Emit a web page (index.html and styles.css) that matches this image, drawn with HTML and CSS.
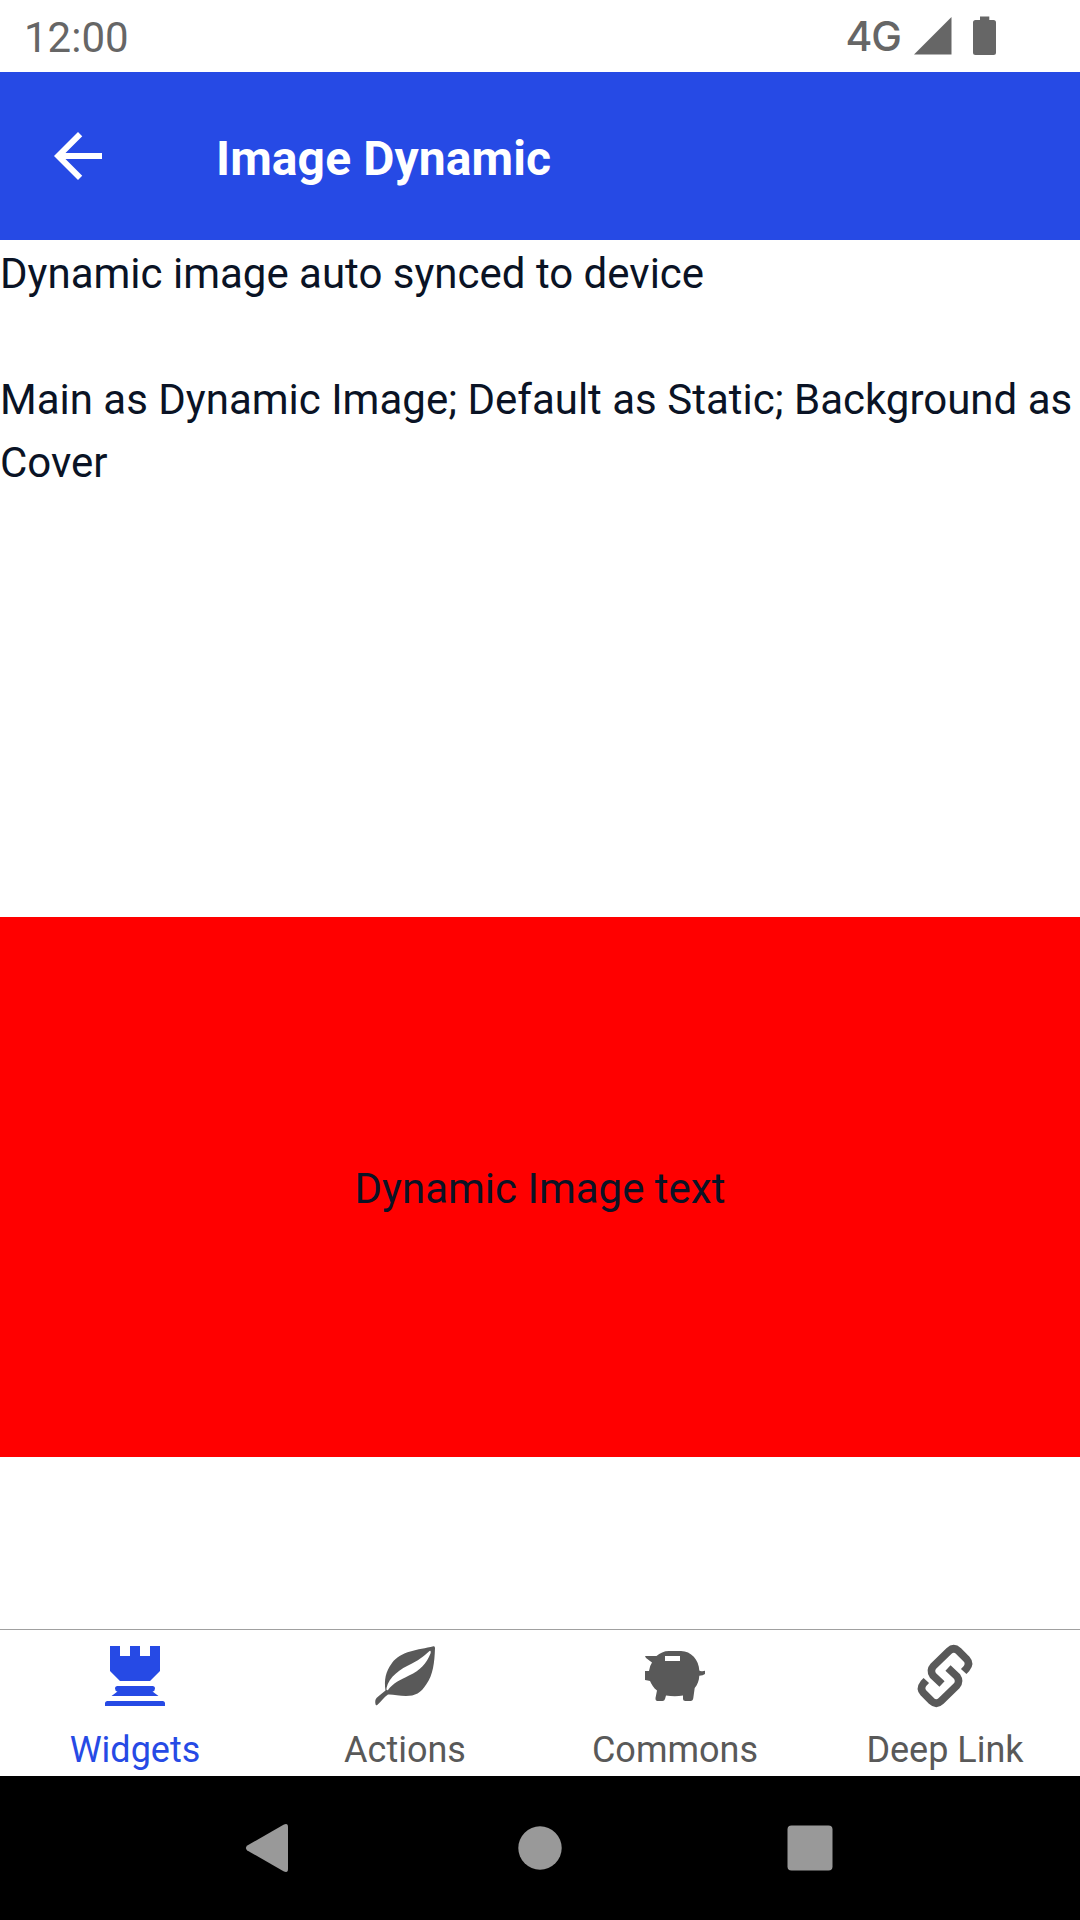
FILE: index.html
```
<!DOCTYPE html>
<html lang="en">
<head>
<meta charset="utf-8">
<title>Image Dynamic</title>
<link rel="stylesheet" href="styles.css">
</head>
<body>
<div class="screen">
  <div class="status">
    <span class="clock">12:00</span>
    <div class="indicators">
      <span class="network">4G</span>
      <svg class="signal" width="38" height="38" viewBox="0 0 38 38"><path d="M0 37.5 37.5 0V37.5Z"/></svg>
      <svg class="battery" width="24" height="40" viewBox="0 0 24 40"><path d="M7 0.5H16.3V4H20.500Q23 4 23 6.500V36.500Q23 39 20.500 39H2.500Q0 39 0 36.500V6.500Q0 4 2.500 4H7Z"/></svg>
    </div>
  </div>
  <header class="header">
    <svg class="back" width="72" height="72" viewBox="0 0 24 24"><path d="M20 11H7.83l5.590-5.590L12 4l-8 8 8 8 1.410-1.410L7.830 13H20v-2z"/></svg>
    <h1 class="title">Image Dynamic</h1>
  </header>
  <main class="content">
    <p class="text">Dynamic image auto synced to device</p>
    <p class="text">Main as Dynamic Image; Default as Static; Background as Cover</p>
    <div class="cover"><p class="text">Dynamic Image text</p></div>
  </main>
  <nav class="tabs">
    <div class="tab active">
      <svg class="icon" viewBox="0 0 60 60"><path d="M5 0H15V10H25V0H35V10H45V0H55V25L45 35H15L5 25ZM12.500 40H47.500Q50 40 50 42.500T47.500 45.500L53.500 50H6.500L12.500 45.500Q10 45 10 42.500T12.500 40ZM2.500 55H57.500Q60 55 60 57.500V60H0V57.500Q0 55 2.500 55Z"/></svg>
      <span class="label">Widgets</span>
    </div>
    <div class="tab">
      <svg class="icon" viewBox="0 0 60 60"><path fill-rule="evenodd" d="M58.500 0.300Q60 0 60 2C59.500 17 58 29 51.500 38C46 47 40 50 31 50C24 50 17 48 13 48.500C9 51 6 56 2.500 58.700Q1 60 0.600 58.500C-0.500 53 1.500 52 5 49L10.500 44.500C9 34 10.500 25.500 17 17C26 5 43 4 58.500 0.300ZM54.500 5C50 9 46 13 37 17.500C25 23 14 31 11.500 42Q11 45 13 44C18 37 25 34 34 29.500C46 24 51 18 55.700 7Q56 4 54.500 5Z"/></svg>
      <span class="label">Actions</span>
    </div>
    <div class="tab">
      <svg class="icon" viewBox="0 0 60 60"><path fill-rule="evenodd" d="M0 10H11.500C15 7 19 5 24 5H36C46 5 54 14 54.300 24.500Q55 25.500 57.500 25.300Q58.500 24.800 60 24.800V28Q58 29.500 54.300 29.700C54 35 52.500 38.500 49.700 42L48.300 52Q48 55 45.500 55H40.500Q38 55 38 52.500V49.500Q30 51 21 49.500L20 53Q19.500 55 17.500 55H12.500Q10.300 55 10.500 52L12 44.500C8.500 42 6.500 38 5 35Q3 34.500 0 34V25H4Q4.500 20 7 16.500L1 12ZM20 10V15H35V10Z"/></svg>
      <span class="label">Commons</span>
    </div>
    <div class="tab">
      <svg class="icon link" viewBox="0 0 60 60"><path d="M48.700 25.500L51.500 22.500Q55.500 17.500 51.500 13L43.500 5Q38.700 0.500 34 5L18.500 20Q14.500 24.500 18 29.500L27 38"/><path d="M11.300 34.500L8.500 37.500Q4.500 42.500 8.500 47L16.500 55Q21.300 59.500 26 55L41.500 40Q45.500 35.500 42 30.500L33 22"/></svg>
      <span class="label">Deep Link</span>
    </div>
  </nav>
  <div class="system">
    <svg width="72" height="72" viewBox="0 0 72 72"><path d="M13.300 33.500 49.500 12.800Q54 10.500 54 15V57Q54 61.500 49.500 59.200L13.300 38.500Q10.500 36 13.300 33.500Z"/></svg>
    <svg width="72" height="72" viewBox="0 0 72 72"><circle cx="36" cy="36" r="21.700"/></svg>
    <svg width="72" height="72" viewBox="0 0 72 72"><rect x="13.500" y="13.500" width="45" height="45" rx="4"/></svg>
  </div>
</div>
</body>
</html>
```
FILE: styles.css
```
* { box-sizing: border-box; margin: 0; }
body { background: #fff; font-family: Roboto, sans-serif; }
svg { display: block; flex: none; }
.screen { width: 1080px; height: 1920px; display: flex; flex-direction: column; overflow: hidden; }
.status { height: 72px; flex: none; display: flex; justify-content: space-between; padding: 0 83px 0 24px; color: #666; fill: #666; }
.clock { font-size: 42px; line-height: 76px; }
.indicators { display: flex; align-items: flex-start; }
.network { font-family: Inter, sans-serif; font-size: 41px; font-weight: 500; line-height: 73px; letter-spacing: -1px; margin-right: 13px; }
.signal { margin: 17px 21px 0 0; }
.battery { margin-top: 16px; }
.header { height: 168px; flex: none; display: flex; align-items: center; gap: 102px; padding-left: 42px; background: #264ae5; color: #fff; fill: #fff; }
.title { font-size: 48px; font-weight: 700; line-height: 64px; padding-top: 6px; letter-spacing: 0.1px; }
.content { flex: 1; display: flex; flex-direction: column; padding-top: 2px; }
.text { font-size: 42px; line-height: 63px; color: #0a1325; }
.text + .text { margin-top: 63px; }
.cover { height: 540px; margin-top: 423px; background: #f00; display: flex; align-items: center; justify-content: center; padding-top: 3px; }
.tabs { height: 147px; flex: none; display: flex; border-top: 1px solid #a0a0a0; color: #595959; fill: #595959; }
.tab { flex: 1; display: flex; flex-direction: column; align-items: center; padding-top: 16px; }
.active { color: #264ae5; fill: #264ae5; }
.icon { width: 60px; height: 60px; overflow: visible; }
.link { fill: none; stroke: #595959; stroke-width: 7.5; }
.label { font-size: 36px; line-height: 42px; margin-top: 23px; }
.system { height: 144px; flex: none; display: flex; justify-content: center; align-items: center; gap: 198px; background: #000; fill: #999; }
```
